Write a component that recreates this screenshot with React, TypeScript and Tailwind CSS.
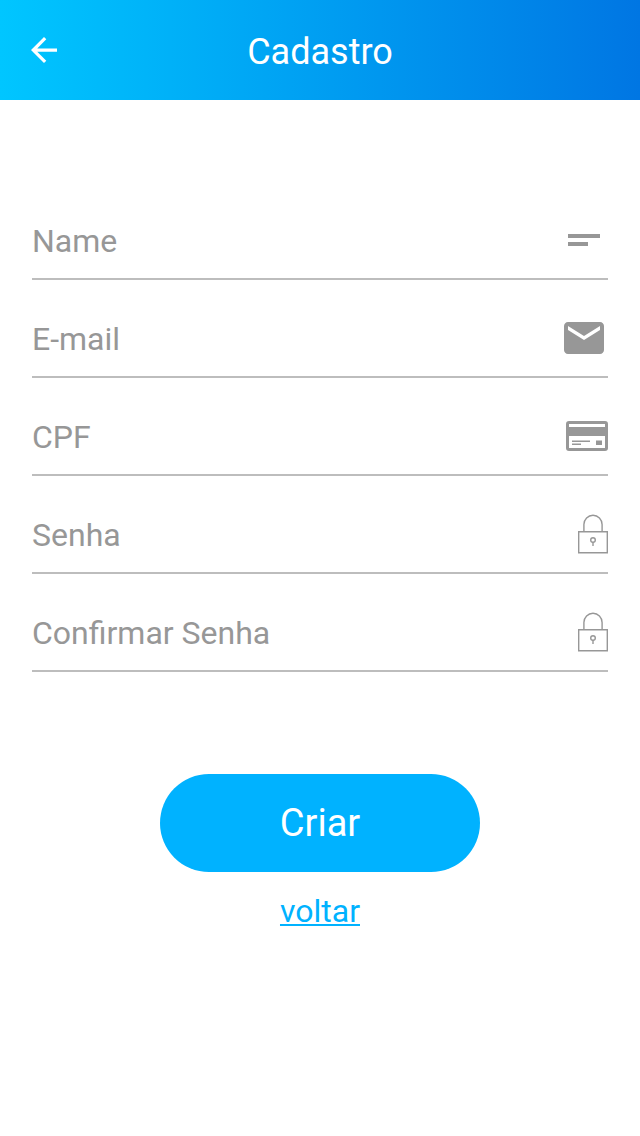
import type { ReactNode } from "react";

function NotesIcon() {
  return (
    <svg width="32" height="12" viewBox="0 0 32 12" fill="#979797" aria-hidden="true">
      <path d="M0 0h32v4H0zM0 8h20v4H0z" />
    </svg>
  );
}

function MailIcon() {
  return (
    <svg width="40" height="32" viewBox="2 4 20 16" fill="#979797" aria-hidden="true">
      <path d="M20 4H4c-1.1 0-1.99.9-1.99 2L2 18c0 1.1.9 2 2 2h16c1.1 0 2-.9 2-2V6c0-1.1-.9-2-2-2zm0 4l-8 5-8-5V6l8 5 8-5v2z" />
    </svg>
  );
}

function CardIcon() {
  return (
    <svg width="42" height="30" viewBox="0 0 42 30" aria-hidden="true">
      <rect x="1.5" y="1.5" width="39" height="27" rx="1.5" fill="none" stroke="#979797" strokeWidth="3" />
      <path d="M2 6h38v9H2zM6 19.5h18V21H6zM6 22.5h9V24H6zM30 19.5h6V24h-6z" fill="#979797" />
    </svg>
  );
}

function LockIcon() {
  return (
    <svg width="30" height="40" viewBox="0 0 30 40" fill="none" stroke="#979797" strokeWidth="1.4" aria-hidden="true">
      <path d="M.7 17.7h28.6v21H.7zM5.9 17.7V10.5a9.1 9.3 0 0 1 18.2 0v7.2" />
      <circle cx="15" cy="26" r="2.3" />
      <path d="M15 28.3V32" />
    </svg>
  );
}

type FieldProps = { id: string; label: string; type: string; icon: ReactNode; iconClass?: string };

function Field({ id, label, type, icon, iconClass = "" }: FieldProps) {
  return (
    <div className="flex h-[78px] items-center border-b-2 border-[#bdbdbd]">
      <input
        id={id}
        type={type}
        placeholder={label}
        aria-label={label}
        className="h-full min-w-0 flex-1 bg-transparent pt-0.5 text-[32px] leading-[48px] text-[#333] outline-none placeholder:text-[#979797]"
      />
      <span className={iconClass}>{icon}</span>
    </div>
  );
}

export default function App() {
  return (
    <div className="min-h-screen bg-white font-[Roboto,sans-serif]">
      <header className="grid h-[100px] grid-cols-[88px_1fr_88px] items-center bg-linear-to-r from-[#00c6ff] to-[#0076e3] text-white">
        <button type="button" aria-label="Voltar" className="flex h-full items-center pl-[31px]">
          <svg width="26" height="26" viewBox="4 4 16 16" fill="currentColor" aria-hidden="true">
            <path d="M20 11H7.83l5.59-5.59L12 4l-8 8 8 8 1.41-1.41L7.83 13H20v-2z" />
          </svg>
        </button>
        <h1 className="pt-1 text-center text-[36px]">Cadastro</h1>
      </header>
      <main className="px-8 pt-[102px]">
        <form className="flex flex-col" onSubmit={(e) => e.preventDefault()}>
          <div className="flex flex-col gap-5">
            <Field id="name" label="Name" type="text" icon={<NotesIcon />} iconClass="pr-2" />
            <Field id="email" label="E-mail" type="email" icon={<MailIcon />} iconClass="pr-1" />
            <Field id="cpf" label="CPF" type="text" icon={<CardIcon />} />
            <Field id="password" label="Senha" type="password" icon={<LockIcon />} />
            <Field id="confirm" label="Confirmar Senha" type="password" icon={<LockIcon />} />
          </div>
          <button type="submit" className="mt-[102px] h-[98px] w-80 self-center rounded-[49px] bg-[#00b2ff] text-[38px] text-white">
            Criar
          </button>
          <a href="#voltar" className="mt-4 self-center text-[32px] leading-[46px] text-[#00b2ff] underline decoration-2 underline-offset-2">voltar</a>
        </form>
      </main>
    </div>
  );
}
